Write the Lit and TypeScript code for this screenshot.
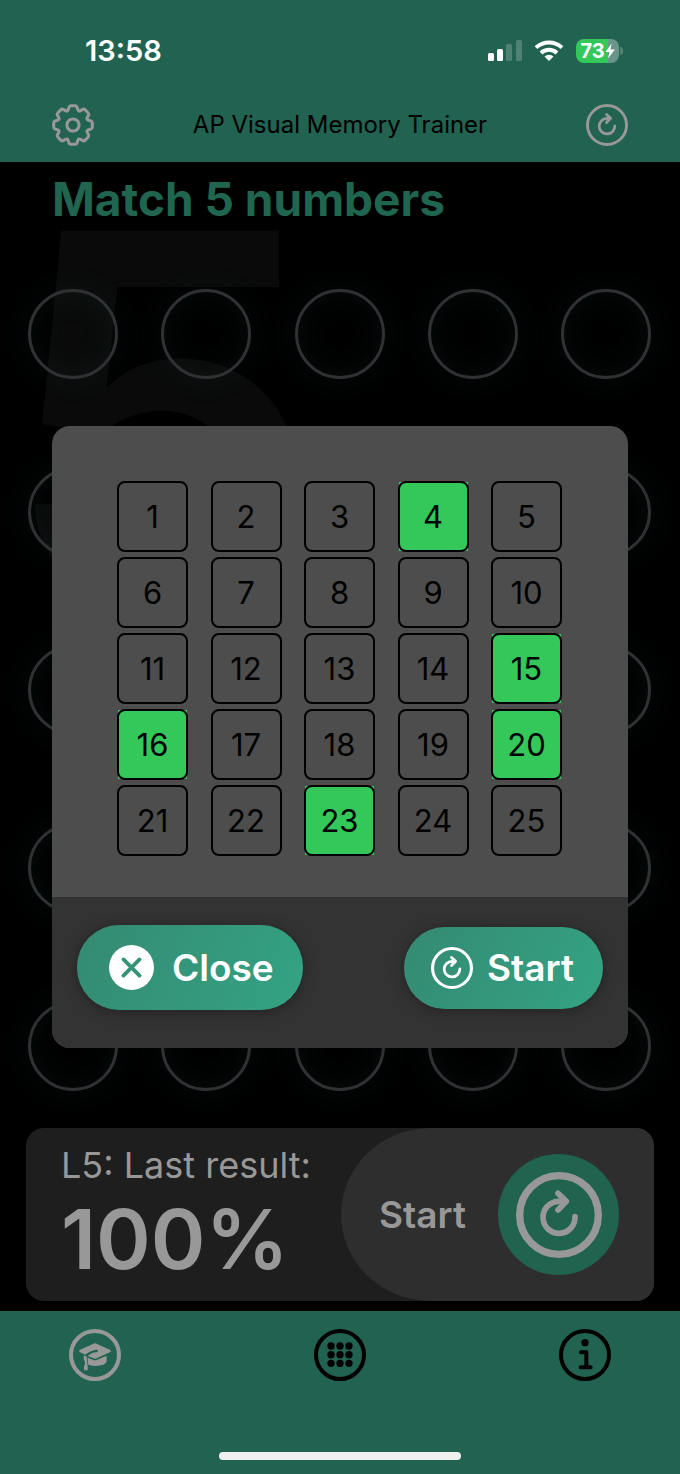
import { LitElement, html, svg, css } from "lit";
import { customElement, property, state } from "lit/decorators.js";

const gearPath = () => {
  const parts: string[] = [];
  const at = (x: number, y: number, k: number) => {
    const a = (k * Math.PI) / 4;
    const px = x * Math.cos(a) - y * Math.sin(a);
    const py = x * Math.sin(a) + y * Math.cos(a);
    return `${px.toFixed(2)} ${py.toFixed(2)}`;
  };
  for (let k = 0; k < 8; k++) {
    parts.push(`${k === 0 ? "M" : "L"}${at(-14, -46, k)}`);
    parts.push(`L${at(-12, -53, k)}Q${at(-11, -57, k)} ${at(-6, -57, k)}`);
    parts.push(`L${at(6, -57, k)}Q${at(11, -57, k)} ${at(12, -53, k)}`);
    parts.push(`L${at(14, -46, k)}Q${at(16, -38.6, k)} ${at(-14, -46, k + 1)}`);
  }
  return parts.join("") + "Z";
};

@customElement("ring-icon")
export class RingIcon extends LitElement {
  @property() name = "restart";
  @property({ type: Number }) ring = 18;

  static styles = css`
    :host { display: block; flex: none; }
    svg { display: block; width: 100%; height: 100%; fill: none; stroke: currentColor; stroke-linecap: round; stroke-linejoin: round; }
    .solid { fill: currentColor; stroke: none; }
  `;

  glyph() {
    switch (this.name) {
      case "gear":
        return svg`<g transform="scale(2.08)" stroke-width="9"><path d=${gearPath()}></path><circle r="18"></circle></g>`;
      case "close":
        return svg`<circle class="solid" r="129"></circle><path d="M-46 -46L46 46M46 -46L-46 46" stroke="#359478" stroke-width="22"></path>`;
      case "cap":
        return svg`<g transform="scale(1.65)">
          <path class="solid" d="M-46 -15L-5 -34Q0 -37 5 -34L46 -15Q50 -12 46 -9L5 10Q0 12 -5 10L-22 3Q-14 -3 -3 -8Q9 -7 9 -13Q8 -18 -2 -15Q-20 -9 -30 -1L-46 -9Q-50 -12 -46 -15Z"></path>
          <path class="solid" d="M-22 8L-5 15Q0 17 5 15L35 2V19Q33 33 0 33Q-15 33 -22 28Z"></path>
          <path class="solid" d="M-34 2L-25 4L-24 26Q-21 30 -22 46H-33Q-34 31 -30 27L-31 18Q-34 16 -34 2Z"></path></g>`;
      case "grid":
        return svg`<g transform="scale(1.65)">${[-26, 0, 26].map((y) =>
          [-27, 0, 27].map((x) => svg`<circle class="solid" cx=${x} cy=${y - 1} r="11"></circle>`))}</g>`;
      case "info":
        return svg`<g transform="scale(1.65)"><circle class="solid" cy="-37" r="11"></circle>
          <path d="M-12 -8H4V37M-13 37H17" stroke-width="12"></path></g>`;
      default:
        return svg`<path d="M48 5A48 48 0 1 1 0 -41H22M-3 -65L22 -41L-3 -15" stroke-width="17"></path>`;
    }
  }

  render() {
    return html`<svg viewBox="-129 -129 258 258" aria-hidden="true">
      ${this.ring ? svg`<circle r=${129 - this.ring / 2} stroke-width=${this.ring}></circle>` : ""}
      ${this.glyph()}
    </svg>`;
  }
}

@customElement("status-bar")
export class StatusBar extends LitElement {
  static styles = css`
    :host { display: flex; align-items: center; justify-content: space-between; height: 102px; padding: 0 61px 0 85px; color: #fff; box-sizing: border-box; }
    .time { font-size: 29px; font-weight: 600; line-height: 36px; }
    .right { display: flex; align-items: center; gap: 12px; }
    svg { display: block; }
    .battery { position: relative; display: flex; align-items: center; justify-content: center; width: 43px; height: 24px; border-radius: 8px;
      background: linear-gradient(90deg, #34c759 74%, #68978a 74%); font-size: 20px; font-weight: 700; line-height: 24px; }
    .battery::after { content: ""; position: absolute; right: -4px; top: 8px; width: 3px; height: 8px; border-radius: 0 4px 4px 0; background: #548375; }
  `;
  render() {
    return html`
      <span class="time">13:58</span>
      <div class="right">
        <svg width="34" height="22" viewBox="0 0 34 22" fill="#fff">
          <rect y="13" width="6" height="8" rx="1.5"></rect><rect x="9" y="9" width="6" height="12" rx="1.5"></rect>
          <g fill="#4f8273"><rect x="18" y="4" width="6" height="17" rx="1.5"></rect><rect x="28" width="6" height="21" rx="1.5"></rect></g>
        </svg>
        <svg width="30" height="22" viewBox="0 0 30 22" fill="none" stroke="#fff" stroke-width="4">
          <path d="M2 7.600A19 19 0 0 1 28 7.600"></path><path d="M7 13A11.800 11.800 0 0 1 23 13"></path>
          <path d="M15 21L10.500 16.500A6.500 6.500 0 0 1 19.500 16.500Z" fill="#fff" stroke="none"></path>
        </svg>
        <div class="battery">73<svg width="10" height="16" viewBox="0 0 10 16" fill="#fff"><path d="M6.500 0.500L0.500 9H4.500L3 15.500L9.800 6.500H5.500Z"></path></svg></div>
      </div>`;
  }
}

@customElement("number-picker")
export class NumberPicker extends LitElement {
  @state() picked = new Set([4, 15, 16, 20, 23]);

  static styles = css`
    :host { display: grid; grid-template-columns: repeat(5, 71px); justify-content: space-between; row-gap: 5px; }
    .cell { display: flex; width: 71px; height: 71px; margin: 0; padding: 1px; border: 0; background: transparent content-box; color: #000; font: 400 31px/40px Inter, sans-serif; }
    .cell.on { background-color: #34c759; }
    .face { box-sizing: border-box; flex: none; display: flex; align-items: center; justify-content: center; width: 71px; height: 71px; margin: -1px; border: 2px solid #000; border-radius: 8px; }
  `;

  toggle(n: number) {
    const next = new Set(this.picked);
    if (!next.delete(n)) next.add(n);
    this.picked = next;
  }

  render() {
    return Array.from({ length: 25 }, (_, i) => i + 1).map((n) => {
      const on = this.picked.has(n);
      return html`<button class="cell ${on ? "on" : ""}" aria-pressed=${on} @click=${() => this.toggle(n)}><span class="face">${n}</span></button>`;
    });
  }
}

@customElement("app-root")
export class AppRoot extends LitElement {
  static styles = css`
    :host { position: relative; display: flex; flex-direction: column; min-height: 100vh; background: #000; font-family: Inter, sans-serif; }
    * { box-sizing: border-box; }
    button { margin: 0; padding: 0; border: 0; background: none; color: inherit; font: inherit; }
    .bar { background: #216350; }
    .nav { display: flex; align-items: center; justify-content: space-between; height: 60px; padding: 0 52px 14px; color: #989898; }
    .nav-title { margin: 0; color: #000; font-size: 24px; font-weight: 400; line-height: 32px; }
    .icon-md { width: 42px; height: 42px; }
    .stage { position: relative; flex: 1; display: flex; flex-direction: column; padding: 9px 0 10px; }
    .heading { position: relative; margin: 0; padding: 0 52px; color: #20654f; font-size: 46px; font-weight: 700; line-height: 56px; }
    .watermark { position: absolute; left: 0; top: -2px; color: #0a0a0a; font-size: 516px; font-weight: 600; line-height: 516px; }
    .circles { position: relative; flex: 1; display: grid; grid-template-columns: repeat(5, 90px); justify-content: space-between; align-content: space-between; margin: 62px 29px 37px 28px; }
    .dot { height: 90px; border: 3px solid #303132; border-radius: 50%; box-shadow: 0 0 32px rgba(60, 130, 120, 0.09), inset 0 0 32px rgba(60, 130, 120, 0.09); }
    .result { display: flex; justify-content: space-between; margin: 0 26px; border-radius: 18px; background: #1e1e1e; color: #989898; overflow: hidden; }
    .score { padding: 13px 0 11px 35px; }
    .score-label { font-size: 36px; line-height: 48px; }
    .score-value { font-size: 83px; font-weight: 600; line-height: 101px; }
    .start { display: flex; align-items: center; gap: 32px; padding: 0 35px 0 38px; border-radius: 90px 0 0 90px / 50% 0 0 50%; background: #2e2e2e; font-size: 37px; font-weight: 600; }
    .badge { display: flex; align-items: center; justify-content: center; width: 121px; height: 121px; border-radius: 50%; background: #20634e; }
    .icon-lg { width: 86px; height: 86px; }
    .tabs { display: flex; flex-direction: column; align-items: center; justify-content: space-between; height: 163px; padding: 18px 0 14px; }
    .tab-row { display: flex; align-self: stretch; justify-content: space-between; padding: 0 69px; }
    .tab { color: #000; }
    .tab.active { color: #989898; }
    .icon-tab { width: 52px; height: 52px; }
    .home { width: 242px; height: 8px; border-radius: 4px; background: #efefef; }
    .overlay { position: absolute; inset: 0; display: grid; align-items: center; padding: 0 52px; }
    .dialog { border-radius: 18px; overflow: hidden; background: #4d4d4d; }
    .dialog-body { padding: 55px 66px 41px 65px; }
    .actions { display: flex; align-items: center; justify-content: space-between; padding: 28px 25px 38px; background: #333; color: #fff; }
    .pill { display: flex; align-items: center; border-radius: 42px; background: linear-gradient(115deg, #348a72, #34a384); box-shadow: 0 2px 14px rgba(0, 0, 0, 0.35); font-size: 37px; font-weight: 600; line-height: 48px; }
    .pill.close { gap: 18px; height: 85px; padding: 0 29px 0 32px; }
    .pill.go { gap: 14px; height: 82px; padding: 0 29px 0 27px; }
    .icon-close { width: 45px; height: 45px; }
  `;

  render() {
    return html`
      <header class="bar">
        <status-bar></status-bar>
        <nav class="nav">
          <button aria-label="Settings"><ring-icon class="icon-md" name="gear" .ring=${0}></ring-icon></button>
          <h1 class="nav-title">AP Visual Memory Trainer</h1>
          <button aria-label="Restart"><ring-icon class="icon-md"></ring-icon></button>
        </nav>
      </header>
      <main class="stage">
        <div class="watermark" aria-hidden="true">5</div>
        <h2 class="heading">Match 5 numbers</h2>
        <div class="circles">${Array.from({ length: 25 }, () => html`<div class="dot"></div>`)}</div>
        <section class="result">
          <div class="score">
            <div class="score-label">L5: Last result:</div>
            <div class="score-value">100%</div>
          </div>
          <button class="start">Start<span class="badge"><ring-icon class="icon-lg" .ring=${22}></ring-icon></span></button>
        </section>
      </main>
      <footer class="bar tabs">
        <div class="tab-row">
          <button class="tab active" aria-label="Training"><ring-icon class="icon-tab" name="cap" .ring=${20}></ring-icon></button>
          <button class="tab" aria-label="Numbers"><ring-icon class="icon-tab" name="grid" .ring=${20}></ring-icon></button>
          <button class="tab" aria-label="About"><ring-icon class="icon-tab" name="info" .ring=${20}></ring-icon></button>
        </div>
        <div class="home"></div>
      </footer>
      <div class="overlay">
        <div class="dialog" role="dialog" aria-label="Numbers to match">
          <div class="dialog-body"><number-picker></number-picker></div>
          <div class="actions">
            <button class="pill close"><ring-icon class="icon-close" name="close" .ring=${0}></ring-icon>Close</button>
            <button class="pill go"><ring-icon class="icon-md" .ring=${19}></ring-icon>Start</button>
          </div>
        </div>
      </div>`;
  }
}
